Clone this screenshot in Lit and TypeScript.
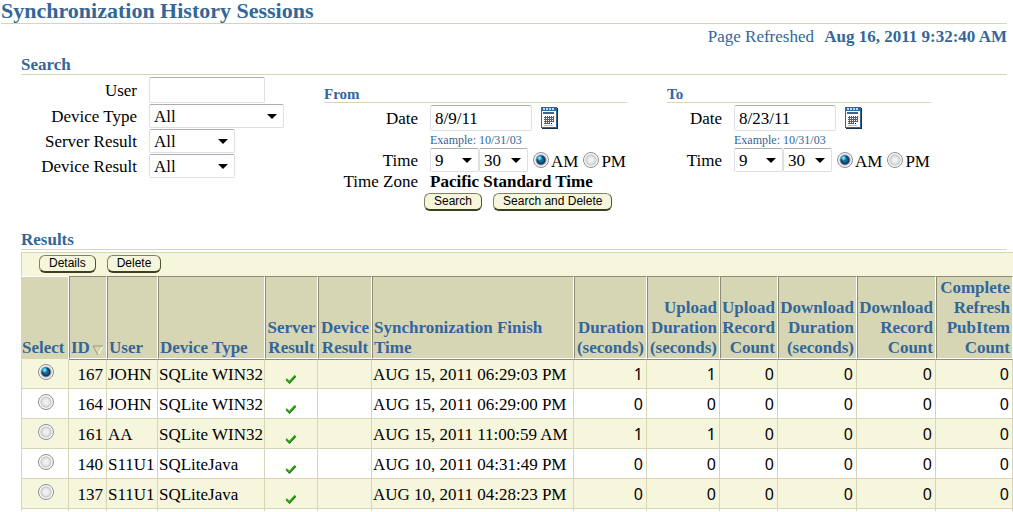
import { LitElement, html, css, svg } from "lit";
import { customElement, property } from "lit/decorators.js";

interface Session {
  id: number;
  user: string;
  device: string;
  finished: string;
  counts: number[];
}

const SESSIONS: Session[] = [
  { id: 167, user: "JOHN", device: "SQLite WIN32", finished: "AUG 15, 2011 06:29:03 PM", counts: [1, 1, 0, 0, 0, 0] },
  { id: 164, user: "JOHN", device: "SQLite WIN32", finished: "AUG 15, 2011 06:29:00 PM", counts: [0, 0, 0, 0, 0, 0] },
  { id: 161, user: "AA", device: "SQLite WIN32", finished: "AUG 15, 2011 11:00:59 AM", counts: [1, 1, 0, 0, 0, 0] },
  { id: 140, user: "S11U1", device: "SQLiteJava", finished: "AUG 10, 2011 04:31:49 PM", counts: [0, 0, 0, 0, 0, 0] },
  { id: 137, user: "S11U1", device: "SQLiteJava", finished: "AUG 10, 2011 04:28:23 PM", counts: [0, 0, 0, 0, 0, 0] },
];

const COUNT_HEADINGS = [
  ["Duration", "(seconds)"],
  ["Upload", "Duration", "(seconds)"],
  ["Upload", "Record", "Count"],
  ["Download", "Duration", "(seconds)"],
  ["Download", "Record", "Count"],
  ["Complete", "Refresh", "PubItem", "Count"],
];

const controls = css`
  * { box-sizing: border-box; }
  input, select, button { margin: 0; font: inherit; color: #000; }
  .text, .select {
    display: block;
    border: 1px solid #dcdfe6;
    border-top-color: #abadb3;
    border-radius: 2px;
    background-color: #fff;
    padding: 1px 4px 0;
  }
  .text { height: 26px; }
  .select {
    height: 24px;
    appearance: none;
    background-image: url("data:image/svg+xml,%3Csvg xmlns='http://www.w3.org/2000/svg' width='10' height='5'%3E%3Cpath d='M0 0h10L5 5z'/%3E%3C/svg%3E");
    background-repeat: no-repeat;
    background-position: right 6px center;
  }
  .radio {
    appearance: none;
    flex: none;
    width: 16px;
    height: 16px;
    border: 1px solid #8e8f8f;
    border-radius: 50%;
    background: radial-gradient(circle, #f0f0f0 0 2px, #dedede 4px, #c2c4c6 5px, #f8f8f8 6px);
  }
  .radio:checked {
    background: radial-gradient(circle at 40% 36%, #b8f0ff 0, #2aa0d8 2px, transparent 3px),
      radial-gradient(circle, #126799 0 2px, #12304f 4px, #9aa7b2 5px, #f4f4f4 6px);
  }
  .button {
    height: 18px;
    padding: 0 9px;
    border: 1px solid #80845c;
    border-right-color: #4d5233;
    border-bottom: 2px solid #3c401f;
    border-radius: 6px;
    background: #f6f6dd;
    font: 12px/15px "Liberation Sans", Arial, sans-serif;
    white-space: nowrap;
  }
`;

@customElement("date-range")
class DateRange extends LitElement {
  @property() heading = "";
  @property() date = "";
  @property({ type: Boolean }) wide = false;

  static styles = [controls, css`
    :host { display: block; }
    .heading {
      margin: 0 0 2px;
      padding-top: 1px;
      border-bottom: 1px solid #d6d6b5;
      color: #336699;
      font-size: 15px;
      line-height: 16px;
    }
    .grid {
      display: grid;
      grid-template-columns: 55px auto;
      column-gap: 12px;
      align-items: center;
    }
    .wide { grid-template-columns: 94px auto; }
    .label { padding-top: 1px; text-align: right; line-height: 20px; white-space: nowrap; }
    .line { display: flex; align-items: center; }
    .date { width: 102px; margin-right: 8px; }
    .calendar { border: 0; background: none; padding: 0; height: 22px; display: flex; }
    .hint {
      grid-column: 2;
      padding-top: 1px;
      color: #336699;
      font-size: 12px;
      line-height: 16px;
    }
    .part { width: 49px; }
    .choice { display: flex; align-items: center; margin-left: 5px; line-height: 20px; gap: 2px; }
    .word { padding-top: 3px; }
    .choice .radio { margin-bottom: 1px; }
  `];

  render() {
    return html`
      <h3 class="heading">${this.heading}</h3>
      <div class="grid ${this.wide ? "wide" : ""}">
        <label class="label" for="date">Date</label>
        <div class="line">
          <input class="text date" id="date" .value=${this.date} />
          <button class="calendar" aria-label="Pick a date">
            <svg width="18" height="22" viewBox="0 0 18 22" shape-rendering="crispEdges">
              <path d="M2 1h16v21H2z" fill="#0f2f5c" />
              <path d="M1 0h16v21H1z" fill="#336699" />
              <path d="M2 4h14v16H2z" fill="#fff" />
              <path d="M3 1h2v2H3zM6 1h2v2H6zM9 1h2v2H9zM12 1h2v2h-2z" fill="#b9dcf8" />
              <path d="M3 5h11v2H3zM4 9h10v8H4z" fill="#336699" />
              ${[0, 1, 2, 3].map((r) => [0, 1, 2, 3, 4].map((c) =>
                svg`<path d="M${4 + c * 2} ${9 + r * 2}h1v1h-1z" fill="#fff" />`))}
              <path d="M10 15h4v3h-4z" fill="#fff" />
              <path d="M11 16h1v1h-1z" fill="#000" />
              <path d="M4 18h9v1H4z" fill="#9cc8ee" />
            </svg>
          </button>
        </div>
        <div class="hint">Example: 10/31/03</div>
        <label class="label" for="hour">Time</label>
        <div class="line">
          <select class="select part" id="hour"><option>9</option></select>
          <select class="select part" aria-label="Minutes"><option>30</option></select>
          <label class="choice"><input class="radio" type="radio" name="half" checked /><span class="word">AM</span></label>
          <label class="choice"><input class="radio" type="radio" name="half" /><span class="word">PM</span></label>
        </div>
        <slot></slot>
      </div>
    `;
  }
}

@customElement("app-root")
class AppRoot extends LitElement {
  static styles = [controls, css`
    :host {
      display: block;
      background: #fff;
      color: #000;
      font: 17px/20px "Liberation Serif", "Times New Roman", serif;
    }
    .title, .heading { margin: 0; border-bottom: 1px solid #d6d6b5; color: #336699; }
    .title { margin: 0 6px 0 1px; font-size: 22px; line-height: 22px; padding-bottom: 1px; }
    .refreshed { margin: 3px 6px 8px; text-align: right; color: #336699; }
    .stamp { margin-left: 6px; }
    .content { padding-left: 21px; }
    .heading { margin: 0 6px 2px 0; font-size: 17px; line-height: 19px; }
    .results { padding-top: 1px; }
    .search {
      display: grid;
      grid-template-columns: 263px 303px 264px;
      column-gap: 40px;
      align-items: start;
      margin-bottom: 18px;
    }
    .filters {
      display: grid;
      grid-template-columns: 116px auto;
      gap: 1px 12px;
      align-items: center;
      justify-items: start;
    }
    .label { padding-top: 2px; text-align: right; justify-self: end; white-space: nowrap; }
    .user { width: 116px; }
    .type { width: 135px; }
    .result { width: 86px; }
    .dates { padding-top: 8px; }
    .actions { display: flex; gap: 11px; }
    .zone { line-height: 20px; text-align: right; }
    .under { padding: 1px 0 0 100px; }
    .bar {
      padding: 2px 17px 3px;
      border: 1px solid #d6d6b5;
      border-width: 1px 0 0 1px;
      background: #f6f6dd;
    }
    .table {
      width: 100%;
      table-layout: fixed;
      border-collapse: separate;
      border-spacing: 0;
    }
    .w48 { width: 48px; } .w38 { width: 38px; } .w51 { width: 51px; }
    .w107 { width: 107px; } .w53 { width: 53px; } .w54 { width: 54px; }
    .w202 { width: 202px; } .w73 { width: 73px; } .w58 { width: 58px; }
    .w79 { width: 79px; } .w77 { width: 77px; }
    .th {
      padding: 1px 1px 0;
      border: 1px solid #fff;
      border-top-color: #8b8b7a;
      border-left-color: #8b8b7a;
      background: #d6d6b5;
      color: #336699;
      text-align: left;
      vertical-align: bottom;
      white-space: nowrap;
    }
    .th:first-child { border-left: 0; border-top-color: #fff; border-bottom-color: #d6d6b5; }
    .th.right { text-align: right; padding-right: 2px; }
    .th.center { text-align: center; }
    .sort { margin-left: 2px; vertical-align: -3px; }
    .td {
      height: 30px;
      padding: 2px 2px 0 1px;
      border-right: 1px solid #d6d6b5;
      border-bottom: 1px solid #d6d6b5;
      vertical-align: middle;
      white-space: nowrap;
    }
    .td:first-child { border-left: 1px solid #d6d6b5; padding: 0 0 4px 2px; text-align: center; }
    .td:first-child .radio { display: block; margin: 0 auto; }
    .odd .td { background: #f6f6dd; }
    .first .td { border-top: 1px solid #8b8b7a; }
    .first .td:first-child { border-top-color: #f6f6dd; }
    .right { text-align: right; }
    .td.right { padding-right: 3px; }
    .td.count { padding-top: 0; font: 16px/20px "Noto Sans", sans-serif; }
    .td.ok { padding-top: 10px; text-align: center; }
    .mark { display: block; margin: 0 auto; }
    .tail .td { height: 2px; border-bottom: 0; padding: 0; }
  `];

  renderSession(s: Session, i: number) {
    return html`
      <tr class="${i % 2 ? "" : "odd"} ${i ? "" : "first"}">
        <td class="td"><input class="radio" type="radio" name="session" aria-label="Select session ${s.id}" ?checked=${i === 0} /></td>
        <td class="td right">${s.id}</td>
        <td class="td">${s.user}</td>
        <td class="td">${s.device}</td>
        <td class="td ok">
          <svg class="mark" width="12" height="10" viewBox="0 0 12 10" role="img" aria-label="Success">
            <path d="M1.5 5.5 4.5 8.5 10.5 2" fill="none" stroke="#146a0c" stroke-width="2" />
            <path d="M1 4.8 4.3 7.8 10 1.5" fill="none" stroke="#35b515" stroke-width="1.5" />
          </svg>
        </td>
        <td class="td"></td>
        <td class="td">${s.finished}</td>
        ${s.counts.map((n) => html`<td class="td right count">${n}</td>`)}
      </tr>
    `;
  }

  render() {
    const widths = [48, 38, 51, 107, 53, 54, 202, 73, 73, 58, 79, 79, 77];
    return html`
      <h1 class="title">Synchronization History Sessions</h1>
      <div class="refreshed">Page Refreshed <b class="stamp">Aug 16, 2011 9:32:40 AM</b></div>
      <main class="content">
        <h2 class="heading">Search</h2>
        <div class="search">
          <div class="filters">
            <label class="label" for="user">User</label>
            <input class="text user" id="user" />
            <label class="label" for="type">Device Type</label>
            <select class="select type" id="type"><option>All</option></select>
            <label class="label" for="server">Server Result</label>
            <select class="select result" id="server"><option>All</option></select>
            <label class="label" for="device">Device Result</label>
            <select class="select result" id="device"><option>All</option></select>
          </div>
          <div class="dates">
            <date-range heading="From" date="8/9/11" wide>
              <span class="zone">Time Zone</span>
              <b>Pacific Standard Time</b>
            </date-range>
            <div class="actions under">
              <button class="button">Search</button>
              <button class="button">Search and Delete</button>
            </div>
          </div>
          <div class="dates">
            <date-range heading="To" date="8/23/11"></date-range>
          </div>
        </div>
        <h2 class="heading results">Results</h2>
        <div class="actions bar">
          <button class="button">Details</button>
          <button class="button">Delete</button>
        </div>
        <table class="table">
          <colgroup>${widths.map((w) => html`<col class="w${w}" />`)}</colgroup>
          <thead>
            <tr>
              <th class="th">Select</th>
              <th class="th">ID<svg class="sort" width="12" height="11" viewBox="0 0 12 11">
                <path d="M6 10 11 1" fill="none" stroke="#fff" />
                <path d="M11 1H1l5 9" fill="none" stroke="#9c9c7b" />
              </svg></th>
              <th class="th">User</th>
              <th class="th">Device Type</th>
              <th class="th center">Server<br />Result</th>
              <th class="th center">Device<br />Result</th>
              <th class="th">Synchronization Finish<br />Time</th>
              ${COUNT_HEADINGS.map((lines) => html`<th class="th right">${lines.map((t, i) => html`${i ? html`<br />` : ""}${t}`)}</th>`)}
            </tr>
          </thead>
          <tbody>
            ${SESSIONS.map((s, i) => this.renderSession(s, i))}
            <tr class="tail" aria-hidden="true">${widths.map(() => html`<td class="td"></td>`)}</tr>
          </tbody>
        </table>
      </main>
    `;
  }
}
